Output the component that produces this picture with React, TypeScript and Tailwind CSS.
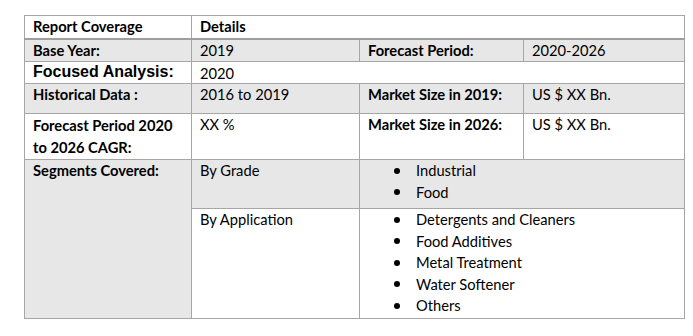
const cell = "border border-[#a6a6a6] align-top px-2 pt-0 leading-[20px]";

function Bullets({ items }: { items: string[] }) {
  return (
    <ul className="pl-[26px]">
      {items.map((item) => (
        <li key={item} className="flex items-center leading-[21.5px]">
          <span className="mr-[16px] inline-block h-[6px] w-[6px] rounded-full bg-black" />
          {item}
        </li>
      ))}
    </ul>
  );
}

export default function App() {
  return (
    <div className="h-[336px] w-[693px] bg-white pl-[24px] pt-[15px] font-['Lato',sans-serif] text-[14.7px] text-black">
      <table className="w-[660px] table-fixed border-collapse">
        <colgroup>
          <col className="w-[167px]" />
          <col className="w-[168px]" />
          <col className="w-[164px]" />
          <col className="w-[161px]" />
        </colgroup>
        <tbody>
          <tr className="h-[23px] border-b-2 border-b-[#9e9e9e]">
            <td className={`${cell} font-bold`}>Report Coverage</td>
            <td className={`${cell} font-bold`} colSpan={3}>
              Details
            </td>
          </tr>
          <tr className="h-[23px] bg-[#e7e7e7]">
            <td className={`${cell} font-bold`}>Base Year:</td>
            <td className={cell}>2019</td>
            <td className={`${cell} font-bold`}>Forecast Period:</td>
            <td className={cell}>2020-2026</td>
          </tr>
          <tr className="h-[22px]">
            <td className={`${cell} font-['Liberation_Sans',sans-serif] text-[16px] leading-[18px] font-bold`}>
              Focused Analysis:
            </td>
            <td className={`${cell} pt-[1px]`} colSpan={3}>
              2020
            </td>
          </tr>
          <tr className="h-[30px] bg-[#e7e7e7]">
            <td className={`${cell} font-bold`}>Historical Data :</td>
            <td className={cell}>2016 to 2019</td>
            <td className={`${cell} font-bold`}>Market Size in 2019:</td>
            <td className={cell}>US $ XX Bn.</td>
          </tr>
          <tr className="h-[46px]">
            <td className={`${cell} font-bold leading-[22px]`}>
              Forecast Period 2020 to 2026 CAGR:
            </td>
            <td className={cell}>XX %</td>
            <td className={`${cell} font-bold`}>Market Size in 2026:</td>
            <td className={cell}>US $ XX Bn.</td>
          </tr>
          <tr className="h-[49px] bg-[#e7e7e7]">
            <td className={`${cell} font-bold`} rowSpan={2}>
              Segments Covered:
            </td>
            <td className={cell}>By Grade</td>
            <td className={cell} colSpan={2}>
              <Bullets items={["Industrial", "Food"]} />
            </td>
          </tr>
          <tr className="h-[110px]">
            <td className={`${cell} bg-white`}>By Application</td>
            <td className={`${cell} bg-white`} colSpan={2}>
              <Bullets
                items={[
                  "Detergents and Cleaners",
                  "Food Additives",
                  "Metal Treatment",
                  "Water Softener",
                  "Others",
                ]}
              />
            </td>
          </tr>
        </tbody>
      </table>
    </div>
  );
}
